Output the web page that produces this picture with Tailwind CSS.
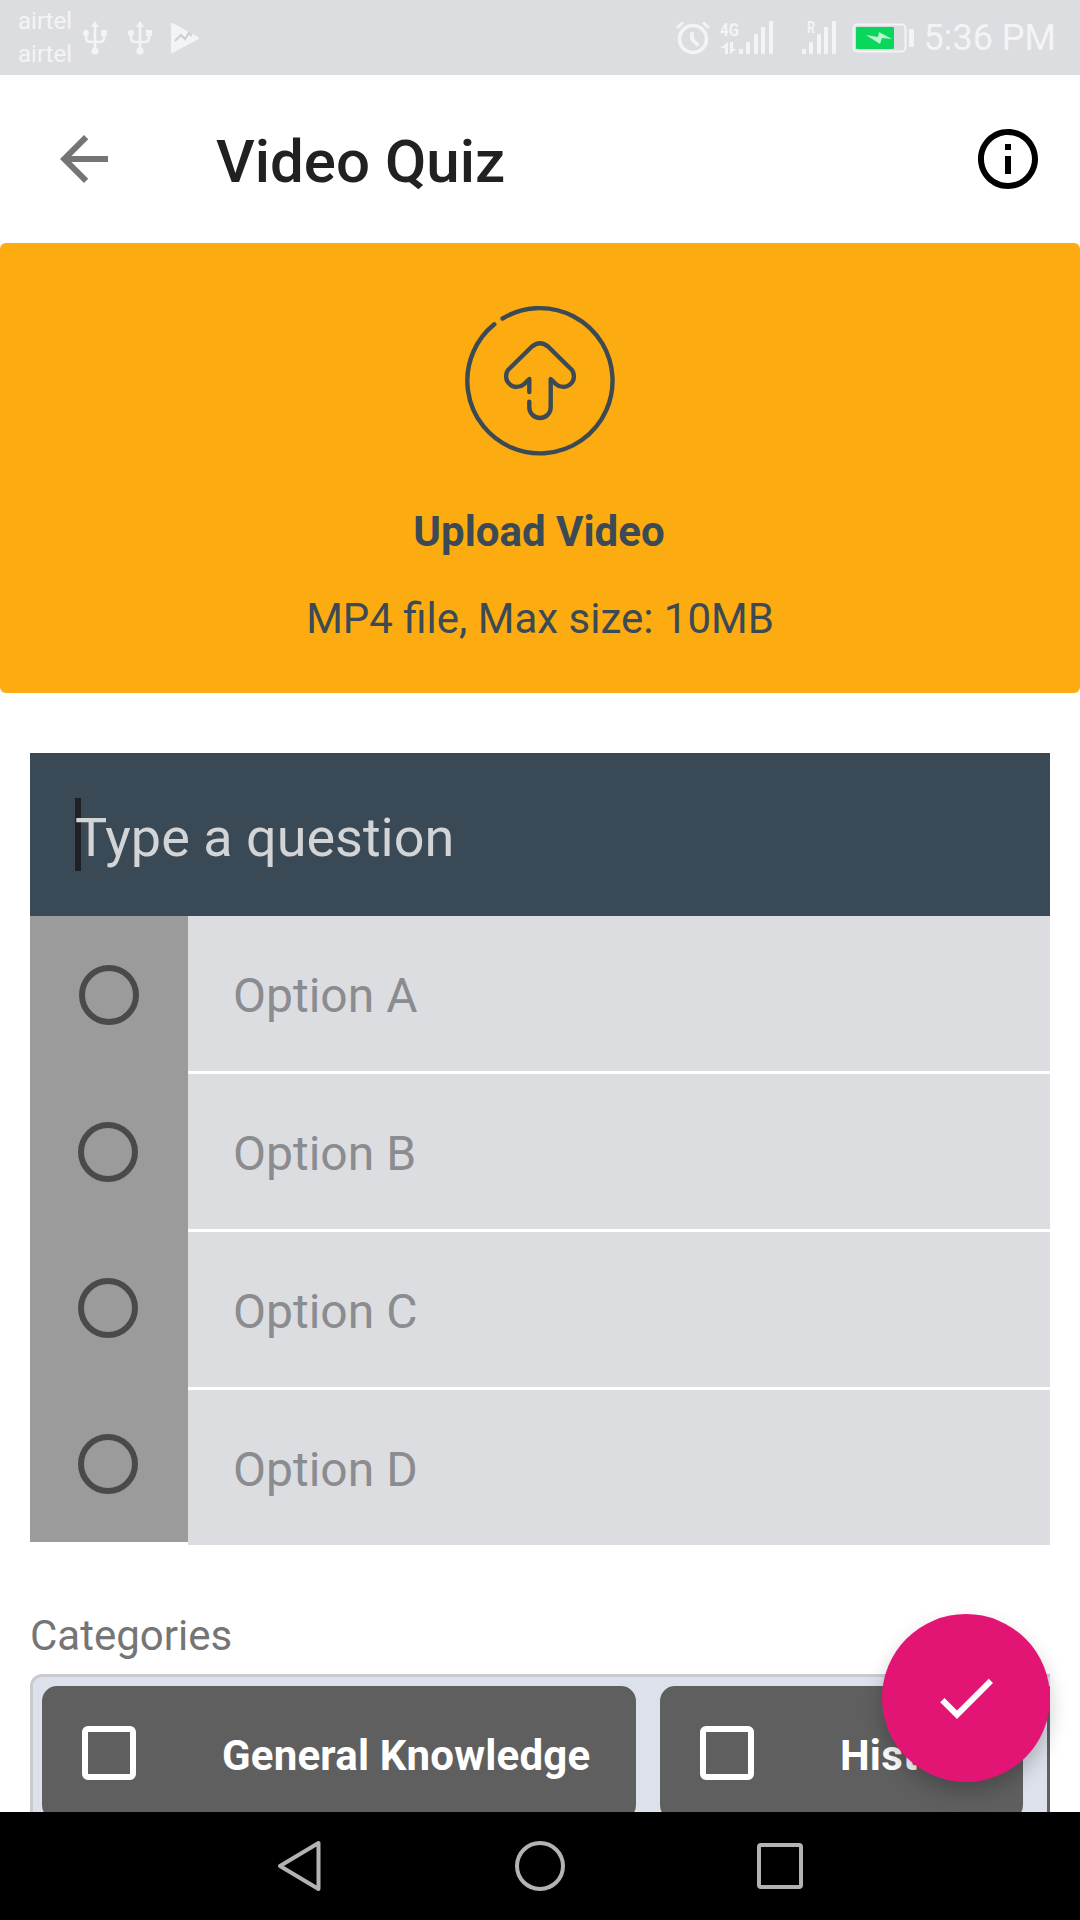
<!DOCTYPE html>
<html lang="en">
<head>
    <meta charset="UTF-8">
    <meta name="viewport" content="width=device-width, initial-scale=1.0">
    <title>Video Quiz</title>
    <script src="https://cdn.jsdelivr.net/npm/@tailwindcss/browser@4"></script>
    <style>
        body {
            font-family: Roboto, sans-serif;
        }
    </style>
</head>
<body class="bg-white">

<div class="relative flex h-[1920px] w-[1080px] flex-col overflow-hidden">

    <!-- Status bar -->
    <div class="flex h-[75px] shrink-0 items-center bg-[#dcdde1] pl-[18px] pr-[24px] text-[#f3f4f6]">
        <div class="w-[54px] pt-px text-[24px] leading-[33px]">
            <p>airtel</p>
            <p>airtel</p>
        </div>
        <svg class="ml-[11px] h-[34px] w-[24px]" viewBox="0 0 24 34" fill="none" stroke="currentColor" stroke-width="2.6">
            <path d="M12 4v26M3 12v5q0 4 5 4h8q5 0 5-4v-5" />
            <path d="M12 0l4 6H8zM18 9h6v6h-6z" fill="currentColor" stroke="none" />
            <circle cx="3" cy="12" r="3" fill="currentColor" stroke="none" />
            <circle cx="12" cy="30" r="3.6" fill="currentColor" stroke="none" />
        </svg>
        <svg class="ml-[21px] h-[34px] w-[24px]" viewBox="0 0 24 34" fill="none" stroke="currentColor" stroke-width="2.6">
            <path d="M12 4v26M3 12v5q0 4 5 4h8q5 0 5-4v-5" />
            <path d="M12 0l4 6H8zM18 9h6v6h-6z" fill="currentColor" stroke="none" />
            <circle cx="3" cy="12" r="3" fill="currentColor" stroke="none" />
            <circle cx="12" cy="30" r="3.6" fill="currentColor" stroke="none" />
        </svg>
        <svg class="ml-[19px] h-[30px] w-[28px]" viewBox="0 0 28 30">
            <path d="M1 1l26 14L1 29z" fill="currentColor" stroke="currentColor" stroke-width="2" stroke-linejoin="round" />
            <path d="M4 18l6-6 4 4 4-6 3 3" fill="none" stroke="#cfd0d4" stroke-width="2.2" />
        </svg>

        <svg class="ml-auto h-[34px] w-[34px]" viewBox="0 0 34 34" fill="none" stroke="currentColor">
            <circle cx="17" cy="18" r="13.5" stroke-width="3.6" />
            <path d="M16 11v7l6 6.500" stroke-width="3.6" />
            <path d="M1 7l6-5.500M33 7l-6-5.500" stroke-width="3" />
        </svg>
        <svg class="ml-[10px] h-[34px] w-[54px] overflow-visible" viewBox="0 0 54 34" fill="currentColor">
            <text x="0" y="14.500" font-size="19" font-weight="700" textLength="19" lengthAdjust="spacingAndGlyphs">4G</text>
            <path d="M8 21v12H5v-6H0zM10 21v12l6-5h-3v-7z" />
            <path d="M19 28h4v5h-4zM26 21h4v12h-4zM34 13h4v20h-4zM41 6h4v27h-4zM49 0h4v33h-4z" />
        </svg>
        <svg class="ml-[27px] h-[34px] w-[36px] overflow-visible" viewBox="0 0 36 34" fill="currentColor">
            <text x="6" y="12" font-size="16" font-weight="700" textLength="8" lengthAdjust="spacingAndGlyphs">R</text>
            <path d="M1 28h4v5H1zM8 21h4v12H8zM16 13h4v20h-4zM23 6h4v27h-4zM31 0h4v33h-4z" />
        </svg>
        <svg class="ml-[15px] h-[30px] w-[62px]" viewBox="0 0 62 30">
            <rect x="1.500" y="1.500" width="52" height="27" rx="4" fill="none" stroke="currentColor" stroke-width="2" />
            <rect x="4" y="4" width="38" height="22" rx="1" fill="#0ad65b" />
            <path d="M14 12l12 2 1-5 13 7-10-1-2 6z" fill="#b9f4cf" />
            <rect x="57" y="6" width="5" height="18" rx="1" fill="currentColor" />
        </svg>
        <span class="ml-[10px] text-[36px] leading-none">5:36 PM</span>
    </div>

    <!-- App bar -->
    <header class="flex h-[168px] shrink-0 items-center pl-[48px] pr-[36px]">
        <svg class="size-[72px]" viewBox="0 0 24 24" fill="#757575">
            <path d="M20 11H7.830l5.590-5.590L12 4l-8 8 8 8 1.410-1.410L7.830 13H20v-2z" />
        </svg>
        <h1 class="ml-[96px] pt-[5px] text-[60px] leading-none font-medium text-[#212121]">Video Quiz</h1>
        <svg class="ml-auto size-[72px]" viewBox="0 0 24 24">
            <path d="M11 7h2v2h-2zm0 4h2v6h-2zm1-9C6.480 2 2 6.480 2 12s4.480 10 10 10 10-4.480 10-10S17.520 2 12 2zm0 18c-4.410 0-8-3.590-8-8s3.590-8 8-8 8 3.590 8 8-3.590 8-8 8z" />
        </svg>
    </header>

    <!-- Upload -->
    <section class="flex h-[450px] shrink-0 flex-col items-center rounded-[6px] bg-[#fcac10] pt-[62px] text-[42px] leading-[50px] text-[#3b4a54]">
        <svg class="h-[152px] w-[152px]" viewBox="0 0 152 152" fill="none" stroke="#3b4a54" stroke-width="4.400" stroke-linecap="round" stroke-linejoin="round">
            <path d="M38.600 13.500A72.600 72.600 0 1 1 30.300 19.300" />
            <path d="M65.300 87V74l-5.500 5.300a10.700 10.700 0 0 1-15.500-14.600L67.700 41.700q8.300-6.800 16.600 0L107.700 64.700a10.700 10.700 0 0 1-15.500 14.600L86.700 74v28.300a10.700 10.700 0 0 1-21.400 0v-5.600" />
        </svg>
        <p class="mt-[50px] mr-[2px] font-bold">Upload Video</p>
        <p class="mt-[37px]">MP4 file, Max size: 10MB</p>
    </section>

    <!-- Question and options -->
    <section class="mt-[60px] ml-[30px] w-[1020px] shrink-0">
        <div class="relative flex h-[163px] items-center border-t-2 border-[#3c464c] bg-[#394956] pl-[45px]">
            <span class="absolute top-[43px] left-[45px] h-[73px] w-[6px] bg-[#1d2126]"></span>
            <p class="relative pt-[5px] text-[54px] leading-none text-[#d3d4d5]">Type a question</p>
        </div>
        <div class="flex items-start">
            <div class="flex h-[626px] w-[158px] flex-col items-start gap-[96px] bg-[#9b9b9b] pt-[49px] pl-[48px]">
                <span class="ml-px size-[60px] rounded-full border-6 border-[#4a4a4a]"></span>
                <span class="mt-px size-[60px] rounded-full border-6 border-[#4a4a4a]"></span>
                <span class="size-[60px] rounded-full border-6 border-[#4a4a4a]"></span>
                <span class="size-[60px] rounded-full border-6 border-[#4a4a4a]"></span>
            </div>
            <div class="flex flex-1 flex-col gap-[3px] text-[48px] leading-[56px] text-[#8b8c8f]">
                <div class="h-[155px] bg-[#dcdde1] pt-[52px] pl-[45px]">Option A</div>
                <div class="h-[155px] bg-[#dcdde1] pt-[52px] pl-[45px]">Option B</div>
                <div class="h-[155px] bg-[#dcdde1] pt-[52px] pl-[45px]">Option C</div>
                <div class="h-[155px] bg-[#dcdde1] pt-[52px] pl-[45px]">Option D</div>
            </div>
        </div>
    </section>

    <!-- Categories -->
    <section class="mt-[66px] ml-[30px] h-[201px] w-[1020px] shrink-0 overflow-hidden">
        <h2 class="h-[63px] text-[42px] leading-[50px] text-[#757575]">Categories</h2>
        <div class="flex h-[156px] gap-[24px] overflow-hidden rounded-tl-[12px] border-t-3 border-l-3 border-[#c9cbce] bg-[#dde1ec] pt-[9px] pl-[9px] text-[42px] leading-[50px] font-bold text-white">
            <div class="flex h-[134px] w-[594px] shrink-0 rounded-[15px] bg-[#5f5f5f] pt-[40px] pl-[40px]">
                <span class="size-[54px] shrink-0 rounded-[6px] border-6 border-white"></span>
                <span class="ml-[86px] pt-[5px] tracking-[0.2px] whitespace-nowrap">General Knowledge</span>
            </div>
            <div class="flex h-[134px] w-[363px] shrink-0 rounded-[15px] bg-[#5f5f5f] pt-[40px] pl-[40px]">
                <span class="size-[54px] shrink-0 rounded-[6px] border-6 border-white"></span>
                <span class="ml-[86px] pt-[5px] tracking-[0.2px] whitespace-nowrap">History</span>
            </div>
            <div class="h-[134px] w-[300px] shrink-0 rounded-[4px] bg-[#5f5f5f]"></div>
        </div>
    </section>

    <!-- Navigation bar -->
    <nav class="mt-auto flex h-[108px] shrink-0 items-center justify-center gap-[192px] bg-black">
        <svg class="h-[52px] w-[46px]" viewBox="0 0 46 52" fill="none" stroke="#b3b3b3" stroke-width="4" stroke-linejoin="round">
            <path d="M41.500 3v46L3 26z" />
        </svg>
        <span class="size-[50px] rounded-full border-4 border-[#b3b3b3]"></span>
        <span class="size-[46px] rounded-[4px] border-4 border-[#b3b3b3]"></span>
    </nav>

    <!-- Floating save button -->
    <button class="absolute top-[1614px] left-[882px] flex size-[168px] items-center justify-center rounded-full bg-[#e21575] shadow-[0_10px_20px_rgba(0,0,0,0.22)]">
        <svg class="size-[72px]" viewBox="0 0 24 24" fill="#fff">
            <path d="M9 16.170L4.830 12l-1.420 1.410L9 19 21 7l-1.410-1.410z" />
        </svg>
    </button>
</div>

</body>
</html>
